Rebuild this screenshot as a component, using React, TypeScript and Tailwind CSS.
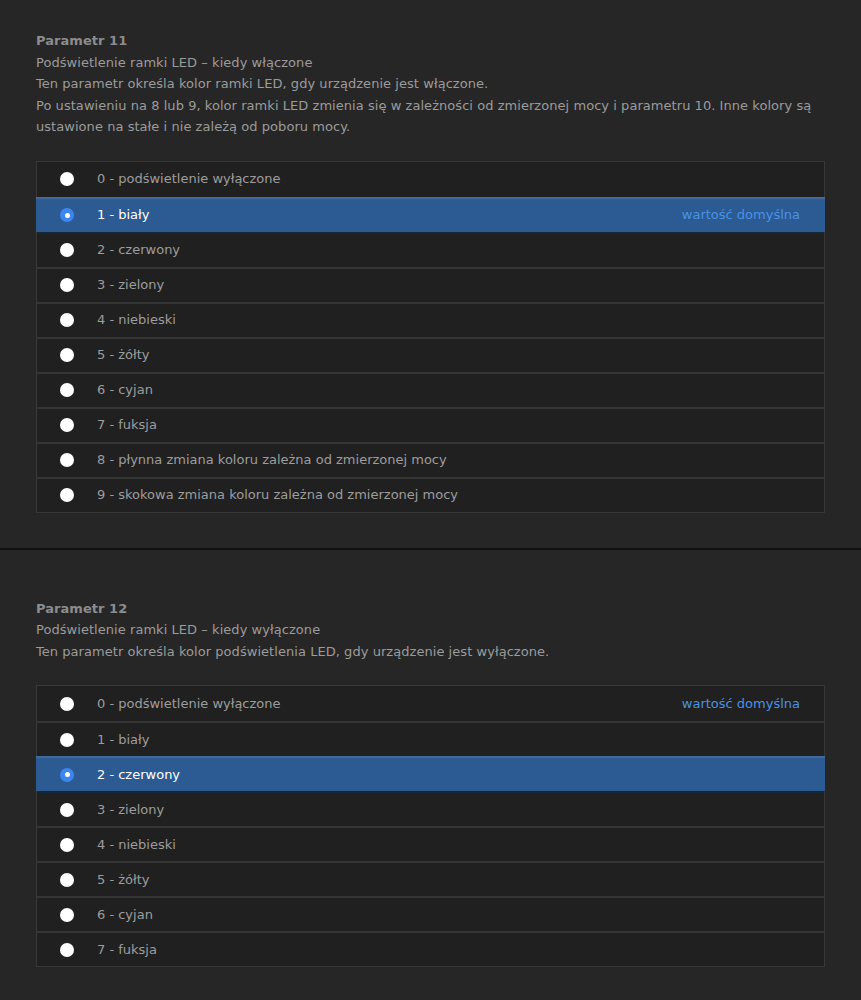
import React from 'react';

type Param = {
    id: number;
    title: string;
    lines: string[];
    options: string[];
    selected: number;
    def: number;
};

const params: Param[] = [
    {
        id: 11,
        title: 'Podświetlenie ramki LED – kiedy włączone',
        lines: [
            'Ten parametr określa kolor ramki LED, gdy urządzenie jest włączone.',
            'Po ustawieniu na 8 lub 9, kolor ramki LED zmienia się w zależności od zmierzonej mocy i parametru 10. Inne kolory są ustawione na stałe i nie zależą od poboru mocy.',
        ],
        options: [
            '0 - podświetlenie wyłączone',
            '1 - biały',
            '2 - czerwony',
            '3 - zielony',
            '4 - niebieski',
            '5 - żółty',
            '6 - cyjan',
            '7 - fuksja',
            '8 - płynna zmiana koloru zależna od zmierzonej mocy',
            '9 - skokowa zmiana koloru zależna od zmierzonej mocy',
        ],
        selected: 1,
        def: 1,
    },
    {
        id: 12,
        title: 'Podświetlenie ramki LED – kiedy wyłączone',
        lines: ['Ten parametr określa kolor podświetlenia LED, gdy urządzenie jest wyłączone.'],
        options: [
            '0 - podświetlenie wyłączone',
            '1 - biały',
            '2 - czerwony',
            '3 - zielony',
            '4 - niebieski',
            '5 - żółty',
            '6 - cyjan',
            '7 - fuksja',
        ],
        selected: 2,
        def: 0,
    },
];

const Radio: React.FC<{ checked: boolean }> = ({ checked }) =>
    checked ? (
        <span className="w-[14px] h-[14px] rounded-full bg-[#3d86f0] flex items-center justify-center shrink-0">
            <span className="w-[5px] h-[5px] rounded-full bg-white" />
        </span>
    ) : (
        <span className="w-[14px] h-[14px] rounded-full bg-white shrink-0" />
    );

const Section: React.FC<{ p: Param; top: string }> = ({ p, top }) => (
    <section className={`px-[36px] pb-[35px] ${top}`}>
        <div className="text-[13px] leading-[21.5px] text-[#9b9b9b] tracking-[0.05px]">
            <div className="font-bold text-[#8c8c8c]">Parametr {p.id}</div>
            <div>{p.title}</div>
            {p.lines.map((l, i) => (
                <div key={i}>{l}</div>
            ))}
        </div>
        <div className="mt-[23px] border border-[#383838] bg-[#202020]">
            {p.options.map((o, i) => {
                const sel = i === p.selected;
                const afterSel = i === p.selected + 1;
                let cls = 'h-[35px] flex items-center text-[13px] ';
                if (i > 0) cls += 'border-t-2 ';
                if (sel) cls += 'bg-[#2b5b92] border-[#41699a] text-white -mx-px pl-[24px] pr-[25px]';
                else cls += (afterSel ? 'border-[#15263a] ' : 'border-[#353535] ') + 'text-[#9d9d9d] pl-[23px] pr-[24px]';
                return (
                    <div key={i} className={cls}>
                        <Radio checked={sel} />
                        <span className="ml-[23px] flex-1">{o}</span>
                        {i === p.def && <span className="text-[#4a92e6]">wartość domyślna</span>}
                    </div>
                );
            })}
        </div>
    </section>
);

export default function App() {
    return (
        <div
            className="min-h-[1000px] bg-[#262626]"
            style={{ fontFamily: '"DejaVu Sans", Verdana, sans-serif' }}
        >
            <Section p={params[0]} top="pt-[30px]" />
            <div className="h-[2px] bg-[#111111]" />
            <Section p={params[1]} top="pt-[48px]" />
        </div>
    );
}
